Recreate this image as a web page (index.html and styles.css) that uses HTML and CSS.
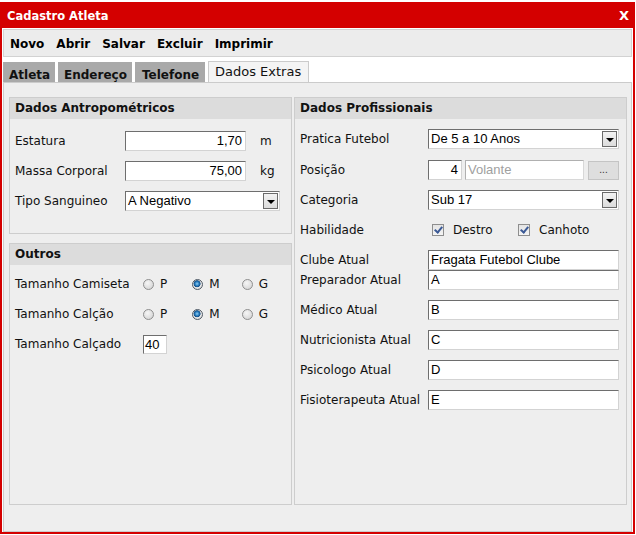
FILE: index.html
```html
<!DOCTYPE html>
<html lang="pt">
<head>
<meta charset="utf-8">
<title>Cadastro Atleta</title>
<link rel="stylesheet" href="styles.css">
</head>
<body>
<div class="window">
  <div class="titlebar">
    <span class="title">Cadastro Atleta</span>
    <span class="close">X</span>
  </div>
  <div class="inner">
    <div class="toolbar">
      <span>Novo</span><span>Abrir</span><span>Salvar</span><span>Excluir</span><span>Imprimir</span>
    </div>
    <div class="tabs">
      <span class="tab t1">Atleta</span>
      <span class="tab t2">Endereço</span>
      <span class="tab t3">Telefone</span>
      <span class="tab active">Dados Extras</span>
    </div>
    <div class="content">
      <div class="col-left">
        <section class="group g-antro">
          <div class="ghead">Dados Antropométricos</div>
          <div class="gbody">
            <div class="row"><span class="lbl lbl-l">Estatura</span><span class="field num w-num">1,70</span><span class="unit">m</span></div>
            <div class="row"><span class="lbl lbl-l">Massa Corporal</span><span class="field num w-num">75,00</span><span class="unit">kg</span></div>
            <div class="row"><span class="lbl lbl-l">Tipo Sanguineo</span><span class="select w-sel"><span class="seltext">A Negativo</span><span class="arrow"></span></span></div>
          </div>
        </section>
        <section class="group g-outros">
          <div class="ghead">Outros</div>
          <div class="gbody">
            <div class="row"><span class="lbl lbl-r">Tamanho Camiseta</span>
              <span class="opt"><span class="radio"></span>P</span>
              <span class="opt"><span class="radio on"></span>M</span>
              <span class="opt"><span class="radio"></span>G</span>
            </div>
            <div class="row"><span class="lbl lbl-r">Tamanho Calção</span>
              <span class="opt"><span class="radio"></span>P</span>
              <span class="opt"><span class="radio on"></span>M</span>
              <span class="opt"><span class="radio"></span>G</span>
            </div>
            <div class="row"><span class="lbl lbl-r">Tamanho Calçado</span><span class="field small">40</span></div>
          </div>
        </section>
      </div>
      <section class="group g-prof">
        <div class="ghead">Dados Profissionais</div>
        <div class="gbody">
          <div class="row"><span class="lbl lbl-p">Pratica Futebol</span><span class="select w-full"><span class="seltext">De 5 a 10 Anos</span><span class="arrow"></span></span></div>
          <div class="row r-pos"><span class="lbl lbl-p">Posição</span>
            <span class="field num code">4</span><span class="field ghost desc">Volante</span><span class="btn">...</span>
          </div>
          <div class="row"><span class="lbl lbl-p">Categoria</span><span class="select w-full"><span class="seltext">Sub 17</span><span class="arrow"></span></span></div>
          <div class="row"><span class="lbl lbl-p">Habilidade</span>
            <span class="chk-opt first"><span class="check"></span>Destro</span>
            <span class="chk-opt"><span class="check"></span>Canhoto</span>
          </div>
          <div class="row"><span class="lbl lbl-p">Clube Atual</span><span class="field w-full">Fragata Futebol Clube</span></div>
          <div class="row r-tight"><span class="lbl lbl-p">Preparador Atual</span><span class="field w-full">A</span></div>
          <div class="row"><span class="lbl lbl-p">Médico Atual</span><span class="field w-full">B</span></div>
          <div class="row"><span class="lbl lbl-p">Nutricionista Atual</span><span class="field w-full">C</span></div>
          <div class="row"><span class="lbl lbl-p">Psicologo Atual</span><span class="field w-full">D</span></div>
          <div class="row"><span class="lbl lbl-p">Fisioterapeuta Atual</span><span class="field w-full">E</span></div>
        </div>
      </section>
    </div>
  </div>
</div>
</body>
</html>
```
FILE: styles.css
```css
html, body {
  margin: 0;
  padding: 0;
  background: #ffffff;
}
body {
  font-family: "DejaVu Sans", Verdana, sans-serif;
  font-size: 12px;
  color: #111;
}
.window {
  margin-top: 2px;
  width: 635px;
  height: 532px;
  box-sizing: border-box;
  border: 2px solid #d40000;
  background: #fff;
}
.titlebar {
  height: 24px;
  background: #d40000;
  color: #fff;
  display: flex;
  align-items: center;
  justify-content: space-between;
  padding: 0 4px 0 5px;
}
.title {
  font-weight: bold;
  font-size: 11.5px;
}
.close {
  font-weight: bold;
  font-size: 13px;
  margin-top: -2px;
}
.inner {
  padding: 1px 1px 0 1px;
}
.toolbar {
  height: 28px;
  box-sizing: border-box;
  border: 1px solid #d2d2d2;
  background: #ececec;
  display: flex;
  align-items: center;
  gap: 12px;
  padding: 2px 0 0 6px;
  font-weight: bold;
  font-size: 12px;
  color: #000;
}
.tabs {
  margin-top: 5px;
  height: 20px;
  display: flex;
  align-items: flex-end;
  gap: 3px;
}
.tab {
  height: 20px;
  box-sizing: border-box;
  background: #a9a9a9;
  font-weight: bold;
  font-size: 12px;
  padding: 6px 0 0 6px;
  line-height: 15px;
  color: #111;
  white-space: nowrap;
  overflow: hidden;
}
.t1 { width: 52px; }
.t2 { width: 74px; }
.t3 { width: 70px; padding-left: 7px; }
.tab.active {
  height: 21px;
  width: 101px;
  background: #f4f4f4;
  border: 1px solid #cbcbcb;
  border-bottom: none;
  font-weight: normal;
  font-size: 13px;
  padding: 2px 0 0 6px;
  line-height: 16px;
}
.content {
  height: 450px;
  box-sizing: border-box;
  border: 1px solid #cbcbcb;
  background: #eeeeee;
  padding: 14px 4px 0 5px;
  display: flex;
  gap: 2px;
  align-items: flex-start;
}
.col-left {
  width: 283px;
  display: flex;
  flex-direction: column;
  gap: 9px;
}
.group {
  box-sizing: border-box;
  border: 1px solid #cdcdcd;
  background: #eeeeee;
}
.g-antro { height: 137px; }
.g-outros { height: 262px; }
.g-prof { width: 333px; height: 408px; }
.ghead {
  height: 21px;
  background: #dcdcdc;
  font-weight: bold;
  font-size: 12px;
  line-height: 21px;
  padding-left: 5px;
  color: #111;
}
.gbody {
  padding: 12px 0 0 5px;
  display: flex;
  flex-direction: column;
  gap: 10px;
}
.g-outros .gbody { padding-top: 9px; }
.g-prof .gbody { padding-top: 10px; }
.row {
  display: flex;
  align-items: center;
  height: 20px;
}
.r-pos { margin-top: 1px; }
.r-tight { margin-top: -10px; }
.lbl {
  flex: none;
  white-space: nowrap;
}
.lbl-l { width: 110px; }
.lbl-r { width: 128px; }
.lbl-p { width: 128px; }
.field {
  box-sizing: border-box;
  height: 20px;
  background: #fff;
  border-style: solid;
  border-width: 1px;
  border-color: #6e6e6e #d3d3d3 #d3d3d3 #6e6e6e;
  font-family: "Liberation Sans", Arial, sans-serif;
  font-size: 13px;
  line-height: 18px;
  padding: 0 2px;
  color: #000;
  white-space: nowrap;
  overflow: hidden;
}
.num { text-align: right; padding-right: 3px; }
.w-num { width: 121px; }
.w-full { width: 191px; }
.small { width: 24px; height: 19px; line-height: 17px; padding: 0 1px; }
.unit { margin-left: 14px; }
.select {
  box-sizing: border-box;
  height: 20px;
  background: #fff;
  border-style: solid;
  border-width: 1px;
  border-color: #6e6e6e #d3d3d3 #d3d3d3 #6e6e6e;
  display: flex;
  align-items: stretch;
  font-family: "Liberation Sans", Arial, sans-serif;
  font-size: 13px;
  color: #000;
}
.w-sel { width: 155px; }
.seltext {
  flex: 1;
  line-height: 18px;
  padding-left: 2px;
}
.arrow {
  width: 15px;
  margin: 1px 1px 1px 0;
  box-sizing: border-box;
  border: 1px solid #6a6a6a;
  background: linear-gradient(#f2f2f2, #dcdcdc);
  display: flex;
  align-items: center;
  justify-content: center;
}
.arrow::after {
  content: "";
  border-left: 4px solid transparent;
  border-right: 4px solid transparent;
  border-top: 4px solid #000;
  margin-top: 1px;
}
.opt {
  width: 50px;
  display: flex;
  align-items: center;
  gap: 6px;
}
.radio {
  width: 11px;
  height: 11px;
  box-sizing: border-box;
  border-radius: 50%;
  border: 1px solid #8f8f8f;
  background: radial-gradient(circle at 40% 35%, #f6f6f6, #cfcfcf);
}
.radio.on {
  border-color: #4f5a66;
  background: radial-gradient(circle at 45% 42%, #8fd0f5 0, #1f74b8 2.2px, #174f85 3.2px, #e8e8e8 3.8px, #d0d0d0 100%);
}
.code { width: 34px; }
.desc { width: 119px; margin-left: 3px; color: #a0a0a0; }
.ghost { border-color: #b0b0b0 #d8d8d8 #d8d8d8 #b0b0b0; }
.btn {
  width: 31px;
  height: 19px;
  box-sizing: border-box;
  margin-left: 4px;
  background: #dedede;
  border: 1px solid #c4c4c4;
  font-family: "Liberation Sans", Arial, sans-serif;
  font-size: 10px;
  line-height: 16px;
  text-align: center;
  color: #333;
}
.chk-opt {
  display: flex;
  align-items: center;
  gap: 9px;
  width: 86px;
  font-size: 12px;
}
.chk-opt.first { margin-left: 4px; }
.check {
  width: 12px;
  height: 12px;
  box-sizing: border-box;
  border: 1px solid #8e8e8e;
  background: linear-gradient(#e4e4e4, #f4f4f4);
  position: relative;
}
.check::after {
  content: "";
  position: absolute;
  left: 3px;
  top: 0px;
  width: 3px;
  height: 6px;
  border-right: 2px solid #3c5a96;
  border-bottom: 2px solid #3c5a96;
  transform: rotate(40deg);
}
```
